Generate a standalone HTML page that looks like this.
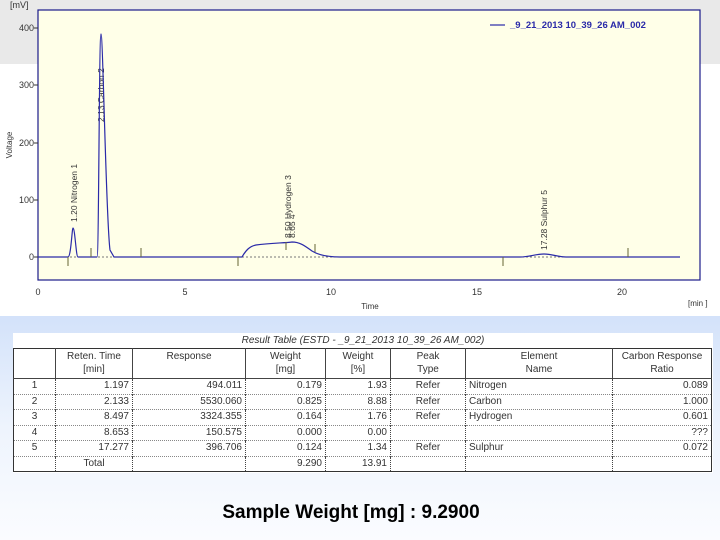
<!DOCTYPE html>
<html><head><style>
body{margin:0;width:720px;height:540px;overflow:hidden;position:relative;font-family:"Liberation Sans",sans-serif;background:#fff}
#top{position:absolute;left:0;top:0;width:720px;height:64px;background:#e9e9e9}
#bot{position:absolute;left:0;top:316px;width:720px;height:224px;background:linear-gradient(#d3e2fa,#eef4fd 50%,#fbfcff)}
svg{position:absolute;left:0;top:0}
#tw{position:absolute;left:13px;top:333px;width:700px;height:140px;background:#fff}
.tt{position:absolute;left:0;width:700px;top:2px;text-align:center;font-size:10px;font-style:italic;color:#333}
table{position:absolute;left:0;top:15px;width:699px;table-layout:fixed;border-collapse:collapse;font-size:10px;color:#333;border:1.5px solid #333}
td{border-left:1px dotted #444;border-top:1px dotted #888;height:14.5px;padding:0 3px;text-align:right;line-height:14px;overflow:hidden;white-space:nowrap}
th{font-weight:normal;border-left:1px solid #444;text-align:center;height:27px;line-height:13px;vertical-align:top;padding-top:1px;border-bottom:1px solid #444;white-space:nowrap;overflow:hidden}
td.c{text-align:center}td.l{text-align:left}
#sw{position:absolute;left:0;width:702px;top:502px;text-align:center;font-size:19px;font-weight:bold;color:#000}
</style></head><body>
<div id="top"></div><div id="bot"></div>
<svg width="720" height="316" font-family="Liberation Sans,sans-serif">
<rect x="38" y="10" width="662" height="270" fill="#ffffe8" stroke="#1a1a8a" stroke-width="1.2"/>
<g font-size="9" fill="#333">
<text x="10" y="8">[mV]</text>
<text x="34" y="31" text-anchor="end">400</text><text x="34" y="88" text-anchor="end">300</text>
<text x="34" y="146" text-anchor="end">200</text><text x="34" y="203" text-anchor="end">100</text>
<text x="34" y="260" text-anchor="end">0</text>
<text x="38" y="295" text-anchor="middle">0</text><text x="185" y="295" text-anchor="middle">5</text>
<text x="331" y="295" text-anchor="middle">10</text><text x="477" y="295" text-anchor="middle">15</text>
<text x="622" y="295" text-anchor="middle">20</text>
<text x="370" y="309" text-anchor="middle" font-size="8">Time</text>
<text x="688" y="306" font-size="8">[min ]</text>
<text transform="translate(12,145) rotate(-90)" text-anchor="middle" font-size="8">Voltage</text>
<text transform="translate(77,222) rotate(-90)" font-size="8.5">1.20 Nitrogen   1</text>
<text transform="translate(104,122) rotate(-90)" font-size="8.5">2.13 Carbon  2</text>
<text transform="translate(291,238) rotate(-90)" font-size="8.5">8.50 Hydrogen  3</text>
<text transform="translate(295,238) rotate(-90)" font-size="8.5">8.65  4</text>
<text transform="translate(547,250) rotate(-90)" font-size="8.5">17.28 Sulphur  5</text>
</g>
<g stroke="#333" stroke-width="1"><line x1="34" y1="28" x2="38" y2="28"/><line x1="34" y1="85" x2="38" y2="85"/><line x1="34" y1="143" x2="38" y2="143"/><line x1="34" y1="200" x2="38" y2="200"/><line x1="34" y1="257" x2="38" y2="257"/></g>
<line x1="38" y1="257" x2="682" y2="257" stroke="#777" stroke-width="1" stroke-dasharray="2,2"/>
<path d="M38 257 L68 257 C71 257,72 228,73 228 C75 228,76 257,78 257 L97 257 C99 257,99 34,101 34 C103 34,106 220,110 250 L114 257 L242 257 C246 250,250 246,256 245 C270 243,285 243,292 242 C300 242,305 246,312 251 C320 256,330 257,340 257 L520 257 C530 257,535 254,544 254 C552 254,558 257,566 257 L680 257" fill="none" stroke="#2a2aa8" stroke-width="1.2"/>
<g stroke="#666633" stroke-width="1"><line x1="68" y1="257" x2="68" y2="266"/><line x1="91" y1="248" x2="91" y2="257"/><line x1="141" y1="248" x2="141" y2="257"/><line x1="238" y1="257" x2="238" y2="266"/><line x1="286" y1="242" x2="286" y2="250"/><line x1="315" y1="244" x2="315" y2="252"/><line x1="503" y1="257" x2="503" y2="266"/><line x1="628" y1="248" x2="628" y2="257"/></g>
<line x1="490" y1="25" x2="505" y2="25" stroke="#2a2aa8" stroke-width="1.2"/>
<text x="510" y="28" font-size="9.5" fill="#2a2aa8" font-weight="bold">_9_21_2013 10_39_26 AM_002</text>
</svg>
<div id="tw"><div class="tt">Result Table (ESTD - _9_21_2013 10_39_26 AM_002)</div>
<table>
<colgroup><col style="width:42px"><col style="width:77px"><col style="width:113px"><col style="width:80px"><col style="width:65px"><col style="width:75px"><col style="width:147px"><col></colgroup>
<tr><th style="border-left:none"></th><th>Reten. Time<br>[min]</th><th>Response</th><th>Weight<br>[mg]</th><th>Weight<br>[%]</th><th>Peak<br>Type</th><th>Element<br>Name</th><th>Carbon Response<br>Ratio</th></tr>
<tr><td class="c" style="border-left:none;border-top:none">1</td><td style="border-top:none">1.197</td><td style="border-top:none">494.011</td><td style="border-top:none">0.179</td><td style="border-top:none">1.93</td><td class="c" style="border-top:none">Refer</td><td class="l" style="border-top:none">Nitrogen</td><td style="border-top:none">0.089</td></tr>
<tr><td class="c" style="border-left:none">2</td><td>2.133</td><td>5530.060</td><td>0.825</td><td>8.88</td><td class="c">Refer</td><td class="l">Carbon</td><td>1.000</td></tr>
<tr><td class="c" style="border-left:none">3</td><td>8.497</td><td>3324.355</td><td>0.164</td><td>1.76</td><td class="c">Refer</td><td class="l">Hydrogen</td><td>0.601</td></tr>
<tr><td class="c" style="border-left:none">4</td><td>8.653</td><td>150.575</td><td>0.000</td><td>0.00</td><td></td><td></td><td>???</td></tr>
<tr><td class="c" style="border-left:none">5</td><td>17.277</td><td>396.706</td><td>0.124</td><td>1.34</td><td class="c">Refer</td><td class="l">Sulphur</td><td>0.072</td></tr>
<tr><td style="border-left:none"></td><td class="c">Total</td><td></td><td>9.290</td><td>13.91</td><td></td><td></td><td></td></tr>
</table></div>
<div id="sw">Sample Weight [mg] : 9.2900</div>
</body></html>
